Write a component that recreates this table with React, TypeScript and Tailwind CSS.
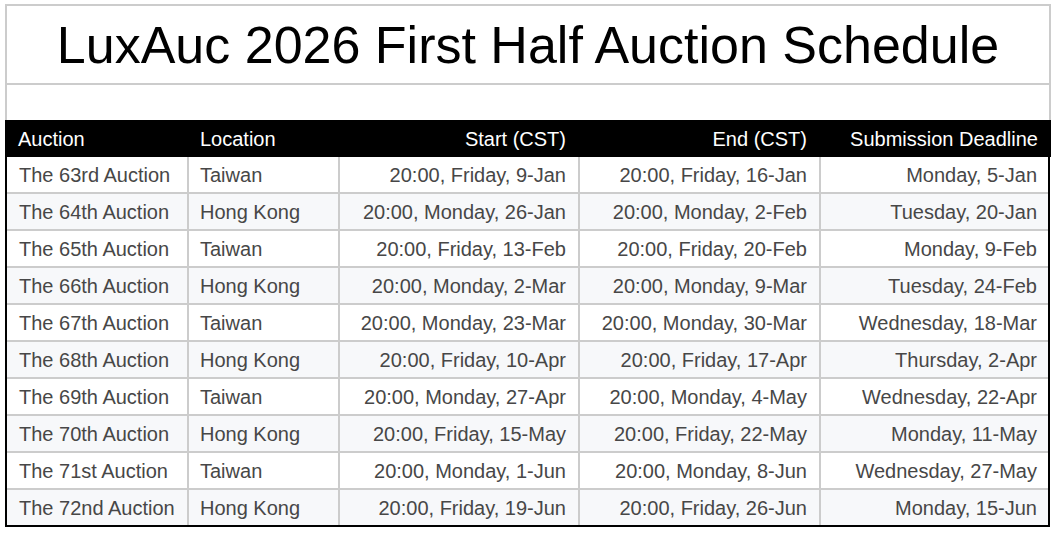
const rows = [
  { name: "The 63rd Auction", loc: "Taiwan", start: "20:00, Friday, 9-Jan", end: "20:00, Friday, 16-Jan", deadline: "Monday, 5-Jan" },
  { name: "The 64th Auction", loc: "Hong Kong", start: "20:00, Monday, 26-Jan", end: "20:00, Monday, 2-Feb", deadline: "Tuesday, 20-Jan" },
  { name: "The 65th Auction", loc: "Taiwan", start: "20:00, Friday, 13-Feb", end: "20:00, Friday, 20-Feb", deadline: "Monday, 9-Feb" },
  { name: "The 66th Auction", loc: "Hong Kong", start: "20:00, Monday, 2-Mar", end: "20:00, Monday, 9-Mar", deadline: "Tuesday, 24-Feb" },
  { name: "The 67th Auction", loc: "Taiwan", start: "20:00, Monday, 23-Mar", end: "20:00, Monday, 30-Mar", deadline: "Wednesday, 18-Mar" },
  { name: "The 68th Auction", loc: "Hong Kong", start: "20:00, Friday, 10-Apr", end: "20:00, Friday, 17-Apr", deadline: "Thursday, 2-Apr" },
  { name: "The 69th Auction", loc: "Taiwan", start: "20:00, Monday, 27-Apr", end: "20:00, Monday, 4-May", deadline: "Wednesday, 22-Apr" },
  { name: "The 70th Auction", loc: "Hong Kong", start: "20:00, Friday, 15-May", end: "20:00, Friday, 22-May", deadline: "Monday, 11-May" },
  { name: "The 71st Auction", loc: "Taiwan", start: "20:00, Monday, 1-Jun", end: "20:00, Monday, 8-Jun", deadline: "Wednesday, 27-May" },
  { name: "The 72nd Auction", loc: "Hong Kong", start: "20:00, Friday, 19-Jun", end: "20:00, Friday, 26-Jun", deadline: "Monday, 15-Jun" },
];

export default function App() {
  return (
    <div className="bg-white min-h-screen pt-1 pl-[5px] font-['Liberation_Sans',Arial,sans-serif]">
      <div className="w-[1046px]">
        {/* title */}
        <div className="h-[79px] border-2 border-b-0 border-[#cccccc] flex items-center justify-center">
          <h1 className="text-[52px] leading-none text-black">LuxAuc 2026 First Half Auction Schedule</h1>
        </div>
        <div className="h-[37px] border-2 border-b-0 border-[#cccccc]" />

        {/* header */}
        <div className="h-[37px] bg-black text-white text-[20px] flex items-center">
          <div className="w-[182px] pl-[13px]">Auction</div>
          <div className="w-[151px] pl-[13px]">Location</div>
          <div className="w-[240px] pr-3 text-right">Start (CST)</div>
          <div className="w-[241px] pr-3 text-right">End (CST)</div>
          <div className="flex-1 pr-[13px] text-right">Submission Deadline</div>
        </div>

        {/* rows */}
        <div className="border-x-2 border-b-2 border-black w-[1045px] text-[20px] text-[#474747]">
          {rows.map((r, i) => (
            <div
              key={r.name}
              className={`flex ${i % 2 === 1 ? "bg-[#f7f8fa]" : "bg-white"} ${i < rows.length - 1 ? "h-[37px] border-b-2 border-[#cccccc]" : "h-[35px]"}`}
            >
              <div className="w-[180px] px-3 flex items-center">{r.name}</div>
              <div className="w-[151px] border-l-2 border-[#cccccc] px-[11px] flex items-center">{r.loc}</div>
              <div className="w-[240px] border-l-2 border-[#cccccc] px-3 flex items-center justify-end">{r.start}</div>
              <div className="w-[241px] border-l-2 border-[#cccccc] px-3 flex items-center justify-end">{r.end}</div>
              <div className="flex-1 border-l-2 border-[#cccccc] px-[11px] flex items-center justify-end">{r.deadline}</div>
            </div>
          ))}
        </div>
      </div>
    </div>
  );
}
